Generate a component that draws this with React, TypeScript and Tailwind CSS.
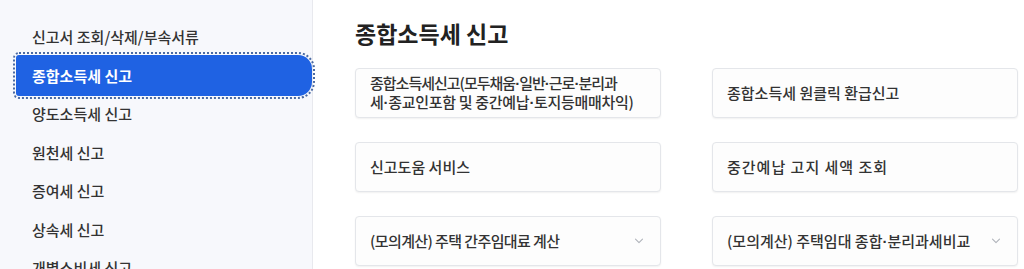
import React from "react";

const menu = [
  "신고서 조회/삭제/부속서류",
  "종합소득세 신고",
  "양도소득세 신고",
  "원천세 신고",
  "증여세 신고",
  "상속세 신고",
  "개별소비세 신고",
];

function Chevron() {
  return (
    <svg width="10" height="6" viewBox="0 0 10 6" fill="none" className="shrink-0">
      <path d="M1.5 1.2l3.5 3.5 3.5-3.5" stroke="#b0b4bb" strokeWidth="1.1" strokeLinecap="round" strokeLinejoin="round" />
    </svg>
  );
}

function Dot() {
  return (
    <span className="font-bold" style={{ fontFamily: '"Liberation Sans", Arial, sans-serif' }}>
      ·
    </span>
  );
}

function Card({
  children,
  chevron,
  textClass = "",
}: {
  children: React.ReactNode;
  chevron?: boolean;
  textClass?: string;
}) {
  return (
    <div className="flex h-[50px] items-center justify-between rounded-[4px] border border-[#e4e6ea] bg-[#fdfdfd] pl-[14px] pr-[16px] shadow-[0_1px_2px_rgba(0,0,0,0.06)]">
      <div className={`whitespace-nowrap text-[15px] font-medium leading-[18px] text-[#333] ${textClass}`}>{children}</div>
      {chevron && <Chevron />}
    </div>
  );
}

export default function App() {
  return (
    <div
      className="flex h-[269px] w-[1024px] overflow-hidden bg-white"
      style={{ fontFamily: '"Noto Sans CJK KR", "Noto Sans", sans-serif' }}
    >
      <aside className="w-[313px] shrink-0 border-r border-[#e8e9ee] bg-[#f7f8fc] pt-[18px]">
        {menu.map((m, i) =>
          i === 1 ? (
            <div key={m} className="flex h-[38.5px] items-center">
              <div className="-my-[1.25px] ml-[16px] flex h-[41px] w-full items-center rounded-l-[3px] rounded-r-[14px] bg-[#1f62e3] pl-[16px] text-[15px] font-bold text-white outline-2 outline-offset-1 outline-dotted outline-[#4a6aa3]">
                {m}
              </div>
            </div>
          ) : (
            <div key={m} className="flex h-[38.5px] items-center pl-[32px] text-[15px] font-medium text-[#333]">
              {m}
            </div>
          )
        )}
      </aside>
      <main className="flex-1 pl-[42px] pr-[6px] pt-[17px]">
        <h1 className="text-[23px] font-bold leading-[32px] text-[#222]">종합소득세 신고</h1>
        <div className="mt-[19px] grid grid-cols-2 gap-x-[51px] gap-y-[24px]">
          <Card>
            <span className="block tracking-[-1px]">
              종합소득세신고(모두채움<Dot />일반<Dot />근로<Dot />분리과
            </span>
            <span className="block tracking-[-0.3px]">
              세<Dot />종교인포함 및 중간예납<Dot />토지등매매차익)
            </span>
          </Card>
          <Card>종합소득세 원클릭 환급신고</Card>
          <Card>신고도움 서비스</Card>
          <Card textClass="tracking-[1px]">중간예납 고지 세액 조회</Card>
          <Card chevron textClass="tracking-[-0.6px]">
            (모의계산) 주택 간주임대료 계산
          </Card>
          <Card chevron>
            (모의계산) 주택임대 종합<Dot />분리과세비교
          </Card>
        </div>
      </main>
    </div>
  );
}
